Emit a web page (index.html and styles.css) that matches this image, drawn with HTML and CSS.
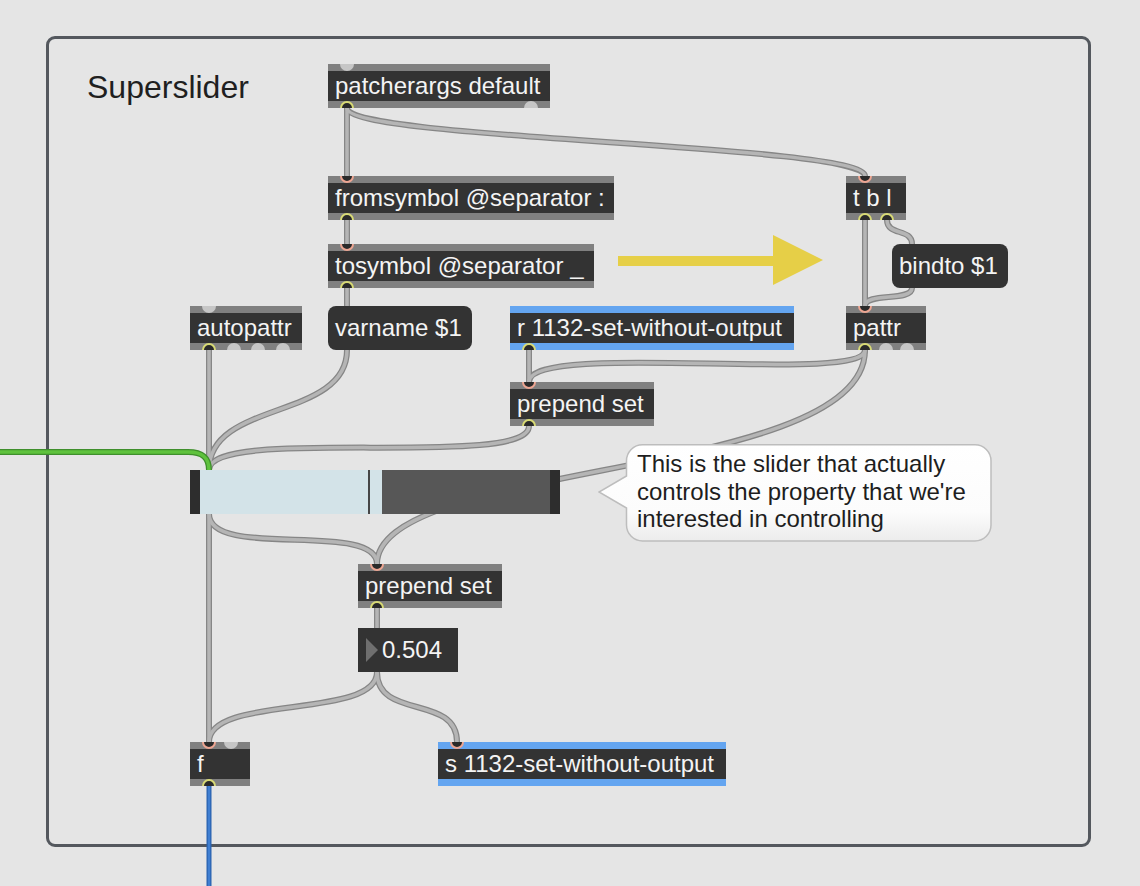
FILE: index.html
```html
<!DOCTYPE html>
<html lang="en">
<head>
  <meta charset="UTF-8">
  <title>Superslider</title>
  <link rel="stylesheet" href="styles.css">
</head>
<body>
  <div class="patcher">
    <div class="panel"></div>
    <div class="panel-title">Superslider</div>

    <!-- patch cords, drawn under the boxes -->
    <svg class="cords" width="1140" height="886" viewBox="0 0 1140 886">
      <defs>
        <path id="c-a" d="M347,108 V176"/>
        <path id="c-b" d="M347,108 C347,140 865,144 865,176"/>
        <path id="c-c" d="M347,220 V244"/>
        <path id="c-d" d="M347,288 V306"/>
        <path id="c-e" d="M865,220 V306"/>
        <path id="c-f" d="M887,220 C887,236 912,228 912,244"/>
        <path id="c-g" d="M912,288 C912,302 865,292 865,306"/>
        <path id="c-h" d="M209,350 V470"/>
        <path id="c-i" d="M347,350 C347,420 209,400 209,470"/>
        <path id="c-j" d="M529,426 C529,470 209,425 209,470"/>
        <path id="c-k" d="M529,350 V382"/>
        <path id="c-l" d="M865,350 C865,385 529,340 529,382"/>
        <path id="c-m" d="M865,350 C865,480 377,460 377,564"/>
        <path id="c-n" d="M209,514 C209,560 377,520 377,564"/>
        <path id="c-o" d="M377,608 V628"/>
        <path id="c-p" d="M377,672 C377,720 209,694 209,742"/>
        <path id="c-q" d="M377,672 C377,720 457,694 457,742"/>
        <path id="c-r" d="M209,514 V742"/>
        <path id="c-green" d="M-5,452 H188 C203,452 209,458 209,470"/>
        <path id="c-blue" d="M209,786 V890"/>
      </defs>
      <g class="cord-edge">
        <use href="#c-a"/><use href="#c-b"/><use href="#c-c"/><use href="#c-d"/>
        <use href="#c-e"/><use href="#c-f"/><use href="#c-g"/><use href="#c-h"/>
        <use href="#c-i"/><use href="#c-j"/><use href="#c-k"/><use href="#c-l"/>
        <use href="#c-m"/><use href="#c-n"/><use href="#c-o"/><use href="#c-p"/>
        <use href="#c-q"/><use href="#c-r"/>
      </g>
      <g class="cord-core">
        <use href="#c-a"/><use href="#c-b"/><use href="#c-c"/><use href="#c-d"/>
        <use href="#c-e"/><use href="#c-f"/><use href="#c-g"/><use href="#c-h"/>
        <use href="#c-i"/><use href="#c-j"/><use href="#c-k"/><use href="#c-l"/>
        <use href="#c-m"/><use href="#c-n"/><use href="#c-o"/><use href="#c-p"/>
        <use href="#c-q"/><use href="#c-r"/>
      </g>
      <use href="#c-green" class="green-edge"/>
      <use href="#c-green" class="green-core"/>
      <use href="#c-blue" class="blue-edge"/>
      <use href="#c-blue" class="blue-core"/>
    </svg>

    <svg class="arrow" width="220" height="60" viewBox="0 0 220 60">
      <rect x="8" y="26" width="156" height="10" fill="#e6cf47"/>
      <polygon points="163,5 213,30 163,55" fill="#e6cf47"/>
    </svg>

    <div class="obj o-patcherargs">
      <div class="ports"><span class="port"></span></div>
      <div class="obj-text">patcherargs default</div>
      <div class="ports ports-out"><span class="port out-on"></span><span class="port"></span></div>
    </div>

    <div class="obj o-fromsymbol">
      <div class="ports"><span class="port in-on"></span></div>
      <div class="obj-text">fromsymbol @separator :</div>
      <div class="ports ports-out"><span class="port out-on"></span></div>
    </div>

    <div class="obj o-tosymbol">
      <div class="ports"><span class="port in-on"></span></div>
      <div class="obj-text">tosymbol @separator _</div>
      <div class="ports ports-out"><span class="port out-on"></span></div>
    </div>

    <div class="obj o-tbl">
      <div class="ports"><span class="port in-on"></span></div>
      <div class="obj-text">t b l</div>
      <div class="ports ports-out"><span class="port out-on"></span><span class="port out-on"></span></div>
    </div>

    <div class="msg m-bindto">bindto $1</div>

    <div class="obj o-autopattr">
      <div class="ports"><span class="port"></span></div>
      <div class="obj-text">autopattr</div>
      <div class="ports ports-out">
        <span class="port out-on"></span><span class="port"></span><span class="port"></span><span class="port"></span>
      </div>
    </div>

    <div class="msg m-varname">varname $1</div>

    <div class="obj send o-receive">
      <div class="ports"></div>
      <div class="obj-text">r 1132-set-without-output</div>
      <div class="ports ports-out"><span class="port out-on"></span></div>
    </div>

    <div class="obj o-pattr">
      <div class="ports"><span class="port in-on"></span></div>
      <div class="obj-text">pattr</div>
      <div class="ports ports-out"><span class="port out-on"></span><span class="port"></span><span class="port"></span></div>
    </div>

    <div class="obj o-prepend1">
      <div class="ports"><span class="port in-on"></span></div>
      <div class="obj-text">prepend set</div>
      <div class="ports ports-out"><span class="port out-on"></span></div>
    </div>

    <div class="slider">
      <div class="slider-cap"></div>
      <div class="slider-fill"></div>
      <div class="slider-knob"></div>
      <div class="slider-tail"></div>
      <div class="slider-rest"></div>
      <div class="slider-cap"></div>
    </div>

    <div class="comment">
      <svg class="bubble" width="394" height="98" viewBox="0 0 394 98">
        <defs>
          <linearGradient id="bubble-fill" x1="0" y1="0" x2="0" y2="1">
            <stop offset="0" stop-color="#ffffff"/>
            <stop offset="0.7" stop-color="#fcfcfc"/>
            <stop offset="1" stop-color="#ececec"/>
          </linearGradient>
        </defs>
        <path d="M44.5,0.75 H377 A16,16 0 0 1 393,16.75 V81 A16,16 0 0 1 377,97 H44.5 A16,16 0 0 1 28.5,81 V64 L1,48 L28.5,32 V16.75 A16,16 0 0 1 44.5,0.75 Z"
              fill="url(#bubble-fill)" stroke="#bdbdbd" stroke-width="1.5"/>
      </svg>
      <p class="comment-text">This is the slider that actually<br>controls the property that we're<br>interested in controlling</p>
    </div>

    <div class="obj o-prepend2">
      <div class="ports"><span class="port in-on"></span></div>
      <div class="obj-text">prepend set</div>
      <div class="ports ports-out"><span class="port out-on"></span></div>
    </div>

    <div class="numbox">
      <span class="num-arrow"></span>
      <span class="num-value">0.504</span>
    </div>

    <div class="obj o-f">
      <div class="ports"><span class="port in-on"></span><span class="port"></span></div>
      <div class="obj-text">f</div>
      <div class="ports ports-out"><span class="port out-on"></span></div>
    </div>

    <div class="obj send o-send">
      <div class="ports"><span class="port in-on"></span></div>
      <div class="obj-text">s 1132-set-without-output</div>
      <div class="ports ports-out"></div>
    </div>
  </div>
</body>
</html>
```

FILE: styles.css
```css
/* Max patcher look */

body {
  margin: 0;
  background-color: #e5e5e5;
  font-family: "Liberation Sans", Arial, sans-serif;
  overflow: hidden;
}

.patcher {
  position: relative;
  width: 1140px;
  height: 886px;
  background-color: #e5e5e5;
}

.panel {
  position: absolute;
  left: 46px;
  top: 36px;
  width: 1039px;
  height: 805px;
  border: 3px solid #54585e;
  border-radius: 9px;
}

.panel-title {
  position: absolute;
  left: 87px;
  top: 69px;
  font-size: 32px;
  line-height: 36px;
  color: #1f1f1f;
}

/* cords */

.cords {
  position: absolute;
  left: 0;
  top: 0;
}

.cords use {
  fill: none;
  stroke-linecap: butt;
}

.cord-edge {
  fill: none;
  stroke: #868686;
  stroke-width: 6;
}

.cord-core {
  fill: none;
  stroke: #b5b5b5;
  stroke-width: 3.5;
}

.green-edge {
  fill: none;
  stroke: #3f8f2c;
  stroke-width: 6;
}

.green-core {
  fill: none;
  stroke: #5fc23d;
  stroke-width: 3.5;
}

.blue-edge {
  fill: none;
  stroke: #2a62ae;
  stroke-width: 5;
}

.blue-core {
  fill: none;
  stroke: #3f7fd2;
  stroke-width: 2.5;
}

.arrow {
  position: absolute;
  left: 610px;
  top: 230px;
}

/* object boxes */

.obj {
  position: absolute;
  height: 44px;
  display: flex;
  flex-direction: column;
  background-color: #333333;
  overflow: hidden;
}

.ports {
  height: 7px;
  flex: none;
  display: flex;
  justify-content: space-between;
  padding: 0 12px;
  background-color: #808080;
  overflow: hidden;
}

.port {
  flex: none;
  width: 14px;
  height: 14px;
  margin-top: -7px;
  border-radius: 50%;
  box-sizing: border-box;
  background-color: #c6c6c6;
}

.ports-out .port {
  margin-top: 0;
}

.port.in-on {
  background-color: #2a2a2a;
  border: 2px solid #eda592;
}

.port.out-on {
  background-color: #2a2a2a;
  border: 2px solid #d8da74;
}

.send .ports {
  background-color: #64a5f0;
}

.obj-text {
  height: 30px;
  padding-left: 7px;
  font-size: 24px;
  line-height: 30px;
  color: #f4f4f4;
  white-space: nowrap;
}

.o-patcherargs { left: 328px; top: 64px; width: 222px; }
.o-fromsymbol  { left: 328px; top: 176px; width: 286px; }
.o-tosymbol    { left: 328px; top: 244px; width: 266px; }
.o-tbl         { left: 846px; top: 176px; width: 60px; }
.o-autopattr   { left: 190px; top: 306px; width: 112px; }
.o-receive     { left: 510px; top: 306px; width: 284px; }
.o-pattr       { left: 846px; top: 306px; width: 80px; }
.o-prepend1    { left: 510px; top: 382px; width: 144px; }
.o-prepend2    { left: 358px; top: 564px; width: 144px; }
.o-f           { left: 190px; top: 742px; width: 60px; }
.o-send        { left: 438px; top: 742px; width: 288px; }

/* message boxes */

.msg {
  position: absolute;
  height: 44px;
  box-sizing: border-box;
  padding-left: 7px;
  background-color: #333333;
  border-radius: 8px;
  font-size: 24px;
  line-height: 44px;
  color: #f4f4f4;
  white-space: nowrap;
}

.m-varname { left: 328px; top: 306px; width: 144px; }
.m-bindto  { left: 892px; top: 244px; width: 116px; }

/* slider */

.slider {
  position: absolute;
  left: 190px;
  top: 470px;
  width: 370px;
  height: 44px;
  display: flex;
}

.slider-cap {
  width: 10px;
  background-color: #2d2d2d;
}

.slider-fill {
  width: 168px;
  background-color: #d3e3e8;
}

.slider-knob {
  width: 2px;
  background-color: #464646;
}

.slider-tail {
  width: 12px;
  background-color: #d3e3e8;
}

.slider-rest {
  flex: 1;
  background-color: #575757;
}

/* comment bubble */

.comment {
  position: absolute;
  left: 598px;
  top: 444px;
  width: 394px;
  height: 98px;
}

.bubble {
  position: absolute;
  left: 0;
  top: 0;
}

.comment-text {
  position: relative;
  margin: 0;
  padding: 6px 0 0 39px;
  font-size: 24px;
  line-height: 27.6px;
  color: #1e1e1e;
  white-space: nowrap;
}

/* number box */

.numbox {
  position: absolute;
  left: 358px;
  top: 628px;
  width: 100px;
  height: 44px;
  display: flex;
  align-items: center;
  background-color: #333333;
}

.num-arrow {
  margin-left: 8px;
  width: 0;
  height: 0;
  border-left: 12px solid #6f6f6f;
  border-top: 12px solid transparent;
  border-bottom: 12px solid transparent;
}

.num-value {
  margin-left: 4px;
  font-size: 24px;
  line-height: 44px;
  color: #f4f4f4;
}
```
